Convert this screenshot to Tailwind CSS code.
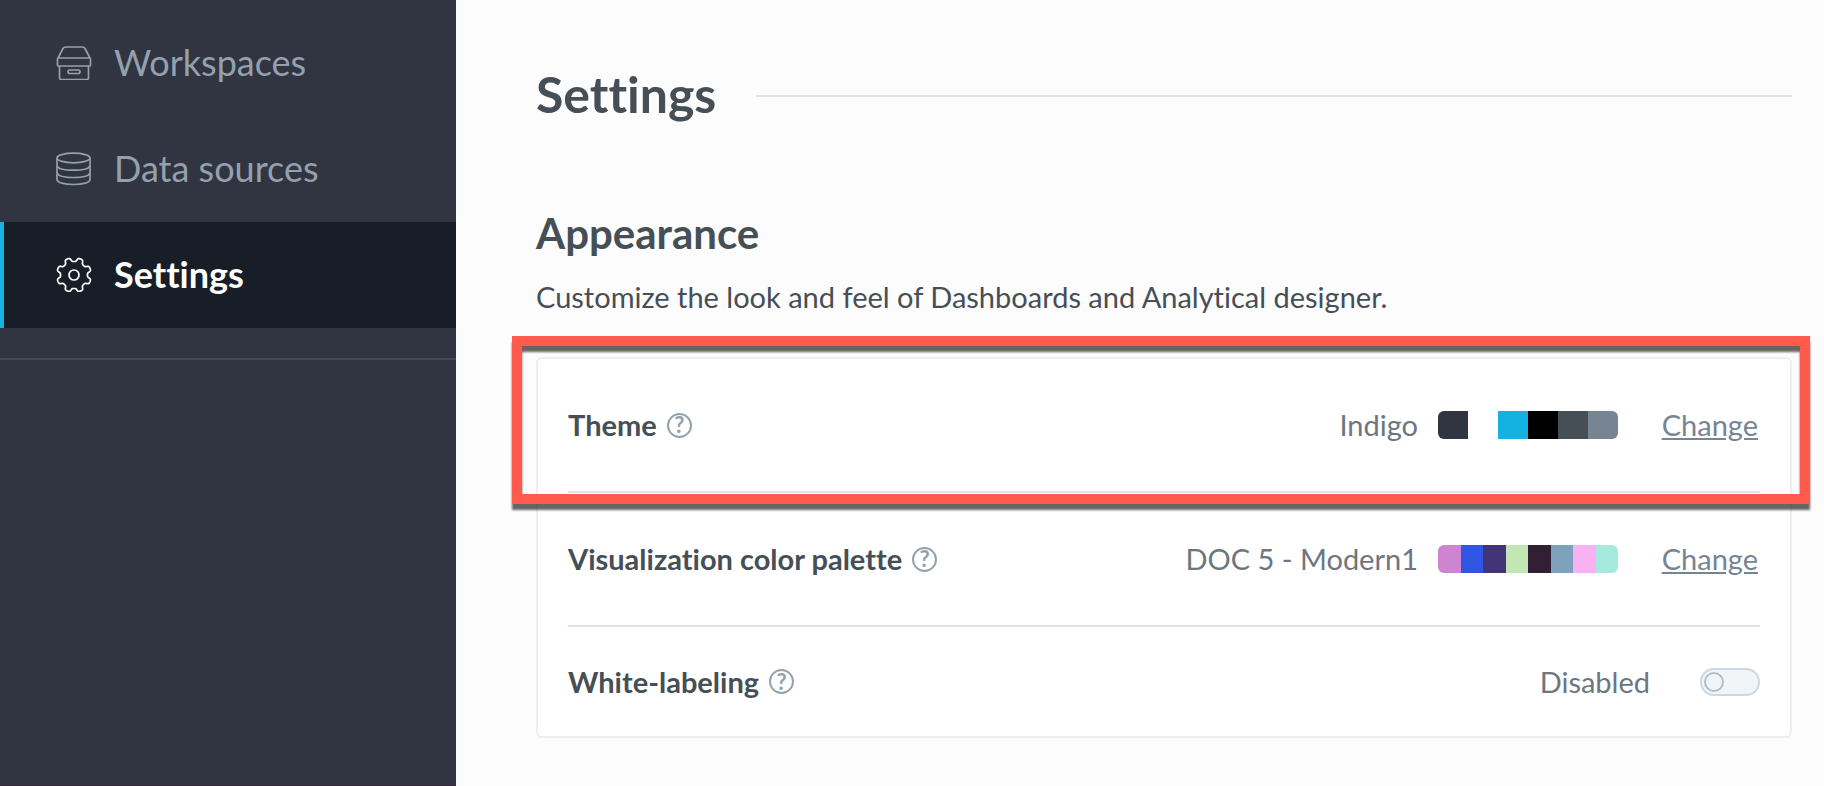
<!DOCTYPE html>
<html lang="en">
<head>
  <meta charset="UTF-8" />
  <meta name="viewport" content="width=device-width, initial-scale=1.0"/>
  <title>Settings</title>
  <script src="https://cdn.jsdelivr.net/npm/@tailwindcss/browser@4"></script>
</head>
<body class="bg-[#fcfcfd] min-h-screen flex font-['Lato',sans-serif] text-[#464e56] [font-variant-ligatures:none]">

  <!-- Sidebar -->
  <aside class="w-1/4 shrink-0 bg-[#313441] pt-[10px] border-b border-[#33293b]">
    <nav class="text-4xl text-[#94a1ad] border-b-2 border-[#464a56] pb-[30px]">
      <a href="#" class="flex items-center gap-[22px] h-[106px] pl-[56px] pb-[2px]">
        <svg class="size-[36px]" viewBox="0 -2 36 36" fill="none" stroke="currentColor" stroke-width="1.7" stroke-linejoin="round">
          <path d="M2 12 L7 2.5 Q8 1 9.500 1 H26.500 Q28 1 29 2.500 L34 12" />
          <rect x="1.500" y="12" width="33" height="8" rx="1" />
          <path d="M3.500 20 V31.500 Q3.500 33.500 5 33.500 H31 Q32.500 33.500 32.500 31.500 V20" />
          <rect x="12" y="24" width="12" height="3.500" rx="1.700" />
        </svg>
        Workspaces
      </a>
      <a href="#" class="flex items-center gap-[22px] h-[106px] pl-[56px] pb-[2px]">
        <svg class="size-[36px]" viewBox="0 -2 36 36" fill="none" stroke="currentColor" stroke-width="1.7">
          <ellipse cx="17.500" cy="6" rx="16.500" ry="4.800" />
          <path d="M1 6 V27.500 C1 30.500 8 32.500 17.500 32.500 S34 30.500 34 27.500 V6" />
          <path d="M1 14 C2 17 9 18.200 17.500 18.200 S33 17 34 14" />
          <path d="M1 21 C2 24 9 25.500 17.500 25.500 S33 24 34 21" />
        </svg>
        Data sources
      </a>
      <a href="#" aria-current="page" class="flex items-center gap-[22px] h-[106px] pl-[52px] pb-[2px] border-l-4 border-[#14b2e2] bg-[#171e27] text-white font-bold">
        <svg id="gear" class="size-[36px]" viewBox="-18 -19 36 36" fill="none" stroke="currentColor" stroke-width="1.700" stroke-linejoin="round">
          <path />
          <circle r="5" />
        </svg>
        Settings
      </a>
    </nav>
  </aside>

  <!-- Content -->
  <main class="grow pl-[80px] pr-[32px] pt-[64px] pb-12">
    <div class="flex items-center gap-[40px] mb-[77px]">
      <h1 class="text-[50px] leading-[60px] pb-1 font-bold">Settings</h1>
      <div class="grow border-t-2 border-[#dde4ed]"></div>
    </div>

    <h2 class="text-[42px] leading-[56px] font-bold mb-[16px]">Appearance</h2>
    <p class="text-[29px] leading-[40px] mb-[40px]">Customize the look and feel of Dashboards and Analytical designer.</p>

    <section class="bg-white border-2 border-[#ebeff4] rounded-md px-[30px] text-[29px] leading-[40px]">
      <div class="relative flex items-center h-[134px] border-b-2 border-[#dde4ed]">
        <h3 class="font-bold">Theme</h3>
        <button type="button" aria-label="About theme" class="ml-[10px] size-[25px] rounded-full border-2 border-[#94a1ad] text-[#94a1ad] flex items-center justify-center text-[22px] leading-none font-bold">?</button>
        <span class="ml-auto text-[#6d7680]">Indigo</span>
        <div class="ml-[20px] flex w-[180px] h-[28px] rounded-md overflow-hidden">
          <span class="grow bg-[#313441]"></span>
          <span class="grow bg-white"></span>
          <span class="grow bg-[#14b2e2]"></span>
          <span class="grow bg-black"></span>
          <span class="grow bg-[#464e56]"></span>
          <span class="grow bg-[#778491]"></span>
        </div>
        <a href="#" class="ml-[40px] w-[102px] pr-[2px] text-right text-[#778491] underline">Change</a>
        <!-- Callout frame around the theme row -->
        <div class="absolute -left-[56px] -right-[50px] -top-[23px] -bottom-[13px] border-10 border-[#ff5a4b] drop-shadow-[0_6px_1px_rgba(0,0,0,0.6)] pointer-events-none"></div>
      </div>

      <div class="flex items-center h-[134px] border-b-2 border-[#dde4ed]">
        <h3 class="font-bold">Visualization color palette</h3>
        <button type="button" aria-label="About color palette" class="ml-[10px] size-[25px] rounded-full border-2 border-[#94a1ad] text-[#94a1ad] flex items-center justify-center text-[22px] leading-none font-bold">?</button>
        <span class="ml-auto text-[#6d7680]">DOC 5 - Modern1</span>
        <div class="ml-[20px] flex w-[180px] h-[28px] rounded-md overflow-hidden">
          <span class="grow bg-[#ce85d1]"></span>
          <span class="grow bg-[#3057e3]"></span>
          <span class="grow bg-[#413477]"></span>
          <span class="grow bg-[#c2e6b4]"></span>
          <span class="grow bg-[#321f35]"></span>
          <span class="grow bg-[#7ea2bb]"></span>
          <span class="grow bg-[#fab1f3]"></span>
          <span class="grow bg-[#a5e9df]"></span>
        </div>
        <a href="#" class="ml-[40px] w-[102px] pr-[2px] text-right text-[#778491] underline">Change</a>
      </div>

      <div class="flex items-center h-[109px]">
        <label for="whiteLabeling" class="font-bold">White-labeling</label>
        <button type="button" aria-label="About white-labeling" class="ml-[10px] size-[25px] rounded-full border-2 border-[#94a1ad] text-[#94a1ad] flex items-center justify-center text-[22px] leading-none font-bold">?</button>
        <span class="ml-auto text-[#6d7680]">Disabled</span>
        <input type="checkbox" id="whiteLabeling" class="ml-[50px] appearance-none w-[60px] h-[28px] rounded-full border-2 border-[#ccd8e2] bg-[#f2f5f7] flex items-center px-[2px] before:size-[20px] before:rounded-full before:border-2 before:border-[#b0beca]" />
      </div>
    </section>
  </main>

  <script>
    // Gear outline: eight rounded teeth
    let d = "";
    for (let i = 0; i <= 360; i++) {
      const a = i * Math.PI / 180;
      const wave = Math.tanh(2.2 * Math.cos(8 * (a - Math.PI / 8))) / Math.tanh(2.2);
      const r = 15.4 + 1.9 * wave;
      d += (i ? "L" : "M") + (r * Math.cos(a)).toFixed(2) + " " + (r * Math.sin(a)).toFixed(2);
    }
    document.querySelector("#gear path").setAttribute("d", d + "Z");
  </script>
</body>
</html>
